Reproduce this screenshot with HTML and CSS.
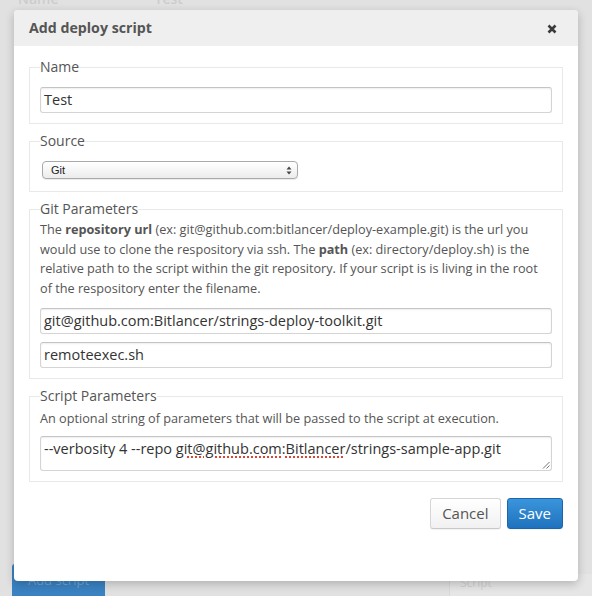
FILE: index.html
```html
<!DOCTYPE html>
<html>
<head>
<meta charset="utf-8">
<title>Add deploy script</title>
<link rel="stylesheet" href="styles.css">
</head>
<body>
<div class="page">
  <div class="page-top">
    <span class="bg-text bg-name">Name</span>
    <span class="bg-text">Test</span>
  </div>
  <div class="page-bottom">
    <span class="bg-button">Add script</span>
    <span class="bg-box">Script</span>
  </div>
</div>

<div class="modal">
  <div class="modal-header">
    <h3 class="modal-title">Add deploy script</h3>
    <span class="close" aria-label="Close">
      <svg width="10" height="10" viewBox="0 0 10 10"><path d="M1.5 1.5 L8.5 8.5 M8.5 1.5 L1.5 8.5" stroke="#3a3a3a" stroke-width="2.6" stroke-linecap="butt"/></svg>
    </span>
  </div>
  <div class="modal-body">
    <fieldset class="group">
      <legend>Name</legend>
      <div class="input">Test</div>
    </fieldset>
    <fieldset class="group">
      <legend>Source</legend>
      <div class="select">
        <span>Git</span>
        <svg width="6" height="9" viewBox="0 0 6 9"><path d="M3 0.5 L5.5 3.5 L0.5 3.5 Z M3 8.5 L5.5 5.5 L0.5 5.5 Z" fill="#444"/></svg>
      </div>
    </fieldset>
    <fieldset class="group">
      <legend>Git Parameters</legend>
      <p class="help">The <b>repository url</b> (ex: git@github.com:bitlancer/deploy-example.git) is the url you would use to clone the respository via ssh. The <b>path</b> (ex: directory/deploy.sh) is the relative path to the script within the git repository. If your script is is living in the root of the respository enter the filename.</p>
      <div class="stack">
        <div class="input">git@github.com:Bitlancer/strings-deploy-toolkit.git</div>
        <div class="input">remoteexec.sh</div>
      </div>
    </fieldset>
    <fieldset class="group">
      <legend>Script Parameters</legend>
      <p class="help help-single">An optional string of parameters that will be passed to the script at execution.</p>
      <div class="textarea">--verbosity 4 --repo <span class="spell">git@github.com</span>:<span class="spell">Bitlancer</span>/strings-sample-app.git<svg class="grip" width="8" height="8" viewBox="0 0 8 8"><path d="M7.5 1 L1 7.5 M7.5 4.5 L4.5 7.5" stroke="#777" stroke-width="1"/></svg></div>
    </fieldset>
  </div>
  <div class="modal-footer">
    <button class="btn">Cancel</button>
    <button class="btn btn-primary">Save</button>
  </div>
</div>
</body>
</html>
```

FILE: styles.css
```css
html, body {
  margin: 0;
  padding: 0;
}
body {
  width: 592px;
  height: 596px;
  overflow: hidden;
  background: #e1e1e1;
  font-family: "Open Sans", "Liberation Sans", sans-serif;
  position: relative;
}

/* background page (behind overlay) */
.page {
  height: 596px;
  display: flex;
  flex-direction: column;
  justify-content: space-between;
}
.page-top {
  display: flex;
  gap: 96px;
  padding: 0 0 0 18px;
  margin-top: -11px;
}
.bg-text {
  font-size: 14px;
  line-height: 20px;
  color: #cdcdcd;
  font-weight: 600;
}
.page-bottom {
  display: flex;
  justify-content: space-between;
  align-items: flex-end;
  padding: 0 0 0 12px;
}
.bg-button {
  width: 93px;
  height: 32px;
  background: #3a82c2;
  color: #6fa3d3;
  font-size: 13px;
  line-height: 32px;
  text-align: center;
  border-radius: 3px 3px 0 0;
}
.bg-box {
  width: 132px;
  height: 22px;
  background: #e6e6e6;
  color: #d2d2d2;
  font-size: 12px;
  padding-left: 10px;
  border-left: 1px solid #d9d9d9;
}

/* modal */
.modal {
  position: absolute;
  left: 14px;
  top: 10px;
  width: 564px;
  height: 571px;
  background: #fff;
  border-radius: 4px;
  box-shadow: 0 3px 10px rgba(0, 0, 0, 0.22);
  display: flex;
  flex-direction: column;
}
.modal-header {
  height: 36px;
  flex: none;
  background: #efefef;
  border-radius: 4px 4px 0 0;
  display: flex;
  align-items: center;
  justify-content: space-between;
  padding: 0 21px 0 15px;
}
.modal-title {
  margin: 0;
  font-size: 14.2px;
  font-weight: 700;
  color: #555;
  line-height: 20px;
}
.close {
  display: flex;
  width: 10px;
  height: 10px;
  margin-top: 1px;
}

.modal-body {
  padding: 11px 15px 0;
  display: flex;
  flex-direction: column;
  gap: 7px;
}
.group {
  margin: 0;
  border: 1px solid #e9e9e9;
  padding: 0 10px 10px;
  min-width: 0;
}
.group legend {
  padding: 0;
  font-size: 14px;
  line-height: 20px;
  color: #555;
}
.input {
  box-sizing: border-box;
  height: 26px;
  margin-top: 10px;
  border: 1px solid #d4d4d4;
  border-top-color: #c4c4c4;
  border-radius: 3px;
  box-shadow: inset 0 1px 2px rgba(0, 0, 0, 0.07);
  padding: 0 3px;
  font-size: 14.5px;
  line-height: 24px;
  color: #333;
}
.stack {
  display: flex;
  flex-direction: column;
  gap: 8px;
  margin-top: 10px;
}
.stack .input {
  margin-top: 0;
}
.select {
  box-sizing: border-box;
  width: 256px;
  height: 18px;
  margin: 10px 0 2px 2px;
  border: 1px solid #a9a9a9;
  border-radius: 4px;
  background: linear-gradient(#ffffff, #ececec);
  box-shadow: 0 1px 1px rgba(0, 0, 0, 0.08);
  display: flex;
  align-items: center;
  justify-content: space-between;
  padding: 0 5px 0 8px;
  font-family: "Liberation Sans", sans-serif;
  font-size: 11px;
  color: #222;
}
.help {
  margin: 1px 0 0;
  font-size: 12.7px;
  line-height: 19.5px;
  color: #555;
}
.help b {
  font-weight: 700;
  color: #555;
}
.help-single {
  margin-top: 3px;
}
.textarea {
  position: relative;
  box-sizing: border-box;
  height: 35px;
  margin-top: 7px;
  border: 1px solid #d4d4d4;
  border-top-color: #c4c4c4;
  border-radius: 3px;
  box-shadow: inset 0 1px 2px rgba(0, 0, 0, 0.07);
  padding: 2px 3px;
  font-size: 14.5px;
  line-height: 20px;
  color: #333;
}
.spell {
  text-decoration: underline dotted #e2412f;
  text-decoration-thickness: 1.5px;
  text-underline-offset: 3px;
}
.grip {
  position: absolute;
  right: 1px;
  bottom: 1px;
}

.modal-footer {
  display: flex;
  justify-content: flex-end;
  gap: 6px;
  padding: 16px 15px 0;
}
.btn {
  box-sizing: border-box;
  height: 31px;
  padding: 0 11px;
  font-family: "Open Sans", "Liberation Sans", sans-serif;
  font-size: 15px;
  color: #555;
  border: 1px solid #d6d6d6;
  border-bottom-color: #c8c8c8;
  border-radius: 3px;
  background: linear-gradient(#ffffff, #f1f1f1);
  box-shadow: 0 1px 1px rgba(0, 0, 0, 0.05);
}
.btn-primary {
  color: #fff;
  border-color: #1d65ab;
  background: linear-gradient(#3a95dc, #1f72bd);
}
```
